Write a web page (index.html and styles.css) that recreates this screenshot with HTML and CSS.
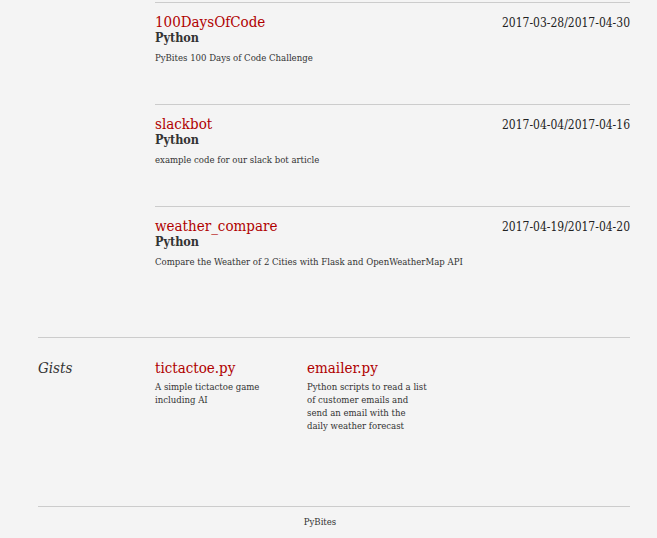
FILE: index.html
```html
<!DOCTYPE html>
<html>
<head>
<meta charset="utf-8">
<link rel="stylesheet" href="styles.css">
</head>
<body>
<div class="page">
  <section class="projects">
    <div class="project">
      <div class="project-head">
        <a class="title" href="#">100DaysOfCode</a>
        <span class="date">2017-03-28/2017-04-30</span>
      </div>
      <div class="lang">Python</div>
      <p class="desc">PyBites 100 Days of Code Challenge</p>
    </div>
    <div class="project">
      <div class="project-head">
        <a class="title" href="#">slackbot</a>
        <span class="date">2017-04-04/2017-04-16</span>
      </div>
      <div class="lang">Python</div>
      <p class="desc">example code for our slack bot article</p>
    </div>
    <div class="project project-last">
      <div class="project-head">
        <a class="title" href="#">weather_compare</a>
        <span class="date">2017-04-19/2017-04-20</span>
      </div>
      <div class="lang">Python</div>
      <p class="desc">Compare the Weather of 2 Cities with Flask and OpenWeatherMap API</p>
    </div>
  </section>
  <section class="gists">
    <h2 class="label">Gists</h2>
    <div class="gist">
      <a class="title" href="#">tictactoe.py</a>
      <p class="desc">A simple tictactoe game including AI</p>
    </div>
    <div class="gist">
      <a class="title" href="#">emailer.py</a>
      <p class="desc">Python scripts to read a list of customer emails and send an email with the daily weather forecast</p>
    </div>
  </section>
  <footer class="footer">PyBites</footer>
</div>
</body>
</html>
```
FILE: styles.css
```css
html, body {
  margin: 0;
  padding: 0;
  background: #f4f4f4;
}
body {
  font-family: "DejaVu Serif Condensed", "DejaVu Serif", "Liberation Serif", serif;
  font-stretch: condensed;
  color: #333;
}
.page {
  width: 592px;
  margin-left: 38px;
}
.projects {
  padding-left: 117px;
  padding-top: 2px;
}
.project {
  border-top: 1px solid #ccc;
  height: 101px;
  box-sizing: content-box;
}
.project-last {
  height: 130px;
}
.project-head {
  display: flex;
  justify-content: space-between;
  align-items: baseline;
  padding-top: 10px;
}
.title {
  color: #b00000;
  text-decoration: none;
  font-size: 15px;
  line-height: 18px;
}
.date {
  font-size: 12px;
  color: #222;
}
.lang {
  font-weight: bold;
  font-size: 12.5px;
  line-height: 13px;
  color: #333;
}
.desc {
  margin: 0;
  font-size: 9.5px;
  line-height: 13px;
  color: #333;
}
.project .desc {
  margin-top: 7px;
}
.gists {
  border-top: 1px solid #ccc;
  display: grid;
  grid-template-columns: 117px 152px 152px;
  padding-top: 20px;
  height: 148px;
}
.label {
  margin: 0;
  font-size: 15px;
  font-weight: normal;
  font-style: italic;
  line-height: 20px;
  color: #333;
}
.gist .title {
  display: block;
  line-height: 20px;
}
.gist .desc {
  margin-top: 2px;
  max-width: 122px;
}
.footer {
  border-top: 1px solid #ccc;
  font-size: 9.5px;
  line-height: 14px;
  padding-top: 8px;
  padding-right: 28px;
  text-align: center;
  color: #333;
}
```
